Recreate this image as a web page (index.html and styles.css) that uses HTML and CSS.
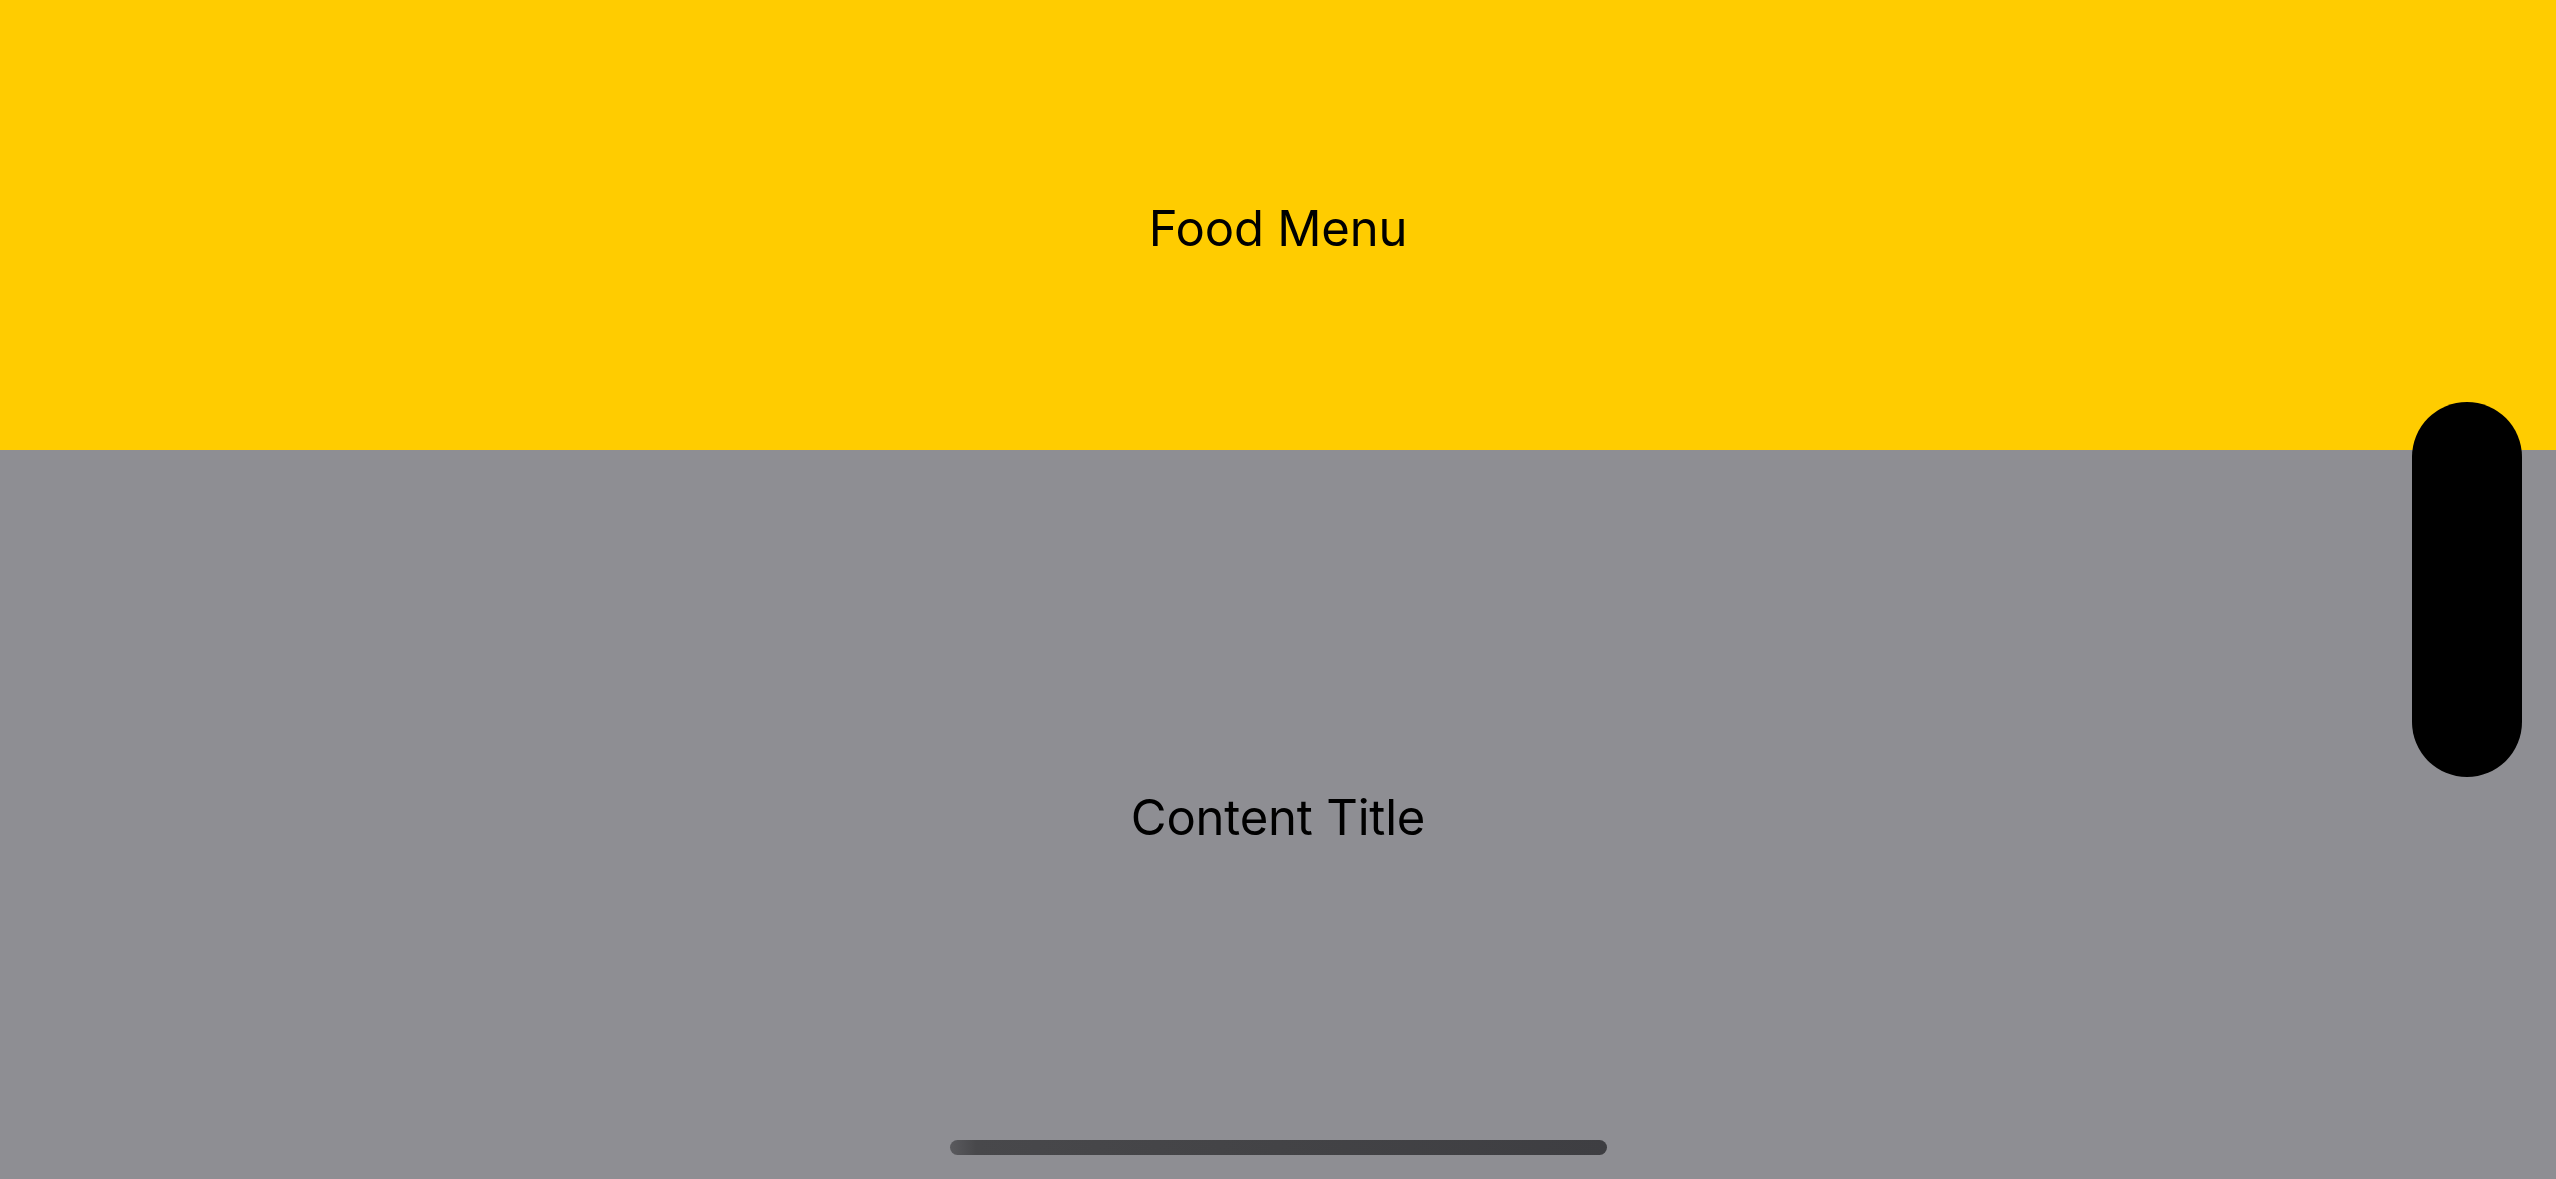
FILE: index.html
```html
<!DOCTYPE html>
<html lang="en">
<head>
<meta charset="utf-8">
<title>Food Menu</title>
<link rel="stylesheet" href="styles.css">
</head>
<body>
<div class="screen">
  <header class="menu-bar">
    <span class="title">Food Menu</span>
  </header>
  <main class="content">
    <span class="title">Content Title</span>
  </main>
  <div class="island"></div>
  <div class="home-indicator"></div>
</div>
</body>
</html>
```
FILE: styles.css
```css
html, body {
  margin: 0;
  padding: 0;
  width: 2556px;
  height: 1179px;
  overflow: hidden;
}
.screen {
  position: relative;
  width: 2556px;
  height: 1179px;
  display: flex;
  flex-direction: column;
  font-family: Inter, "Liberation Sans", sans-serif;
}
.menu-bar {
  height: 450px;
  flex: none;
  background: #ffcc00;
  display: flex;
  align-items: center;
  justify-content: center;
}
.content {
  flex: 1;
  background: #8e8e93;
  display: flex;
  align-items: center;
  justify-content: center;
}
.title {
  font-size: 49px;
  font-weight: 400;
  color: #000;
  line-height: 1;
  letter-spacing: -0.2px;
  padding-top: 6px;
}
.island {
  position: absolute;
  left: 2412px;
  top: 402px;
  width: 110px;
  height: 375px;
  border-radius: 55px;
  background: #000;
}
.home-indicator {
  position: absolute;
  left: 950px;
  top: 1140px;
  width: 657px;
  height: 15px;
  border-radius: 8px;
  background: linear-gradient(90deg, #5a5a5e 0%, #48484b 4%, #434346 50%, #3e3e42 100%);
}
```
